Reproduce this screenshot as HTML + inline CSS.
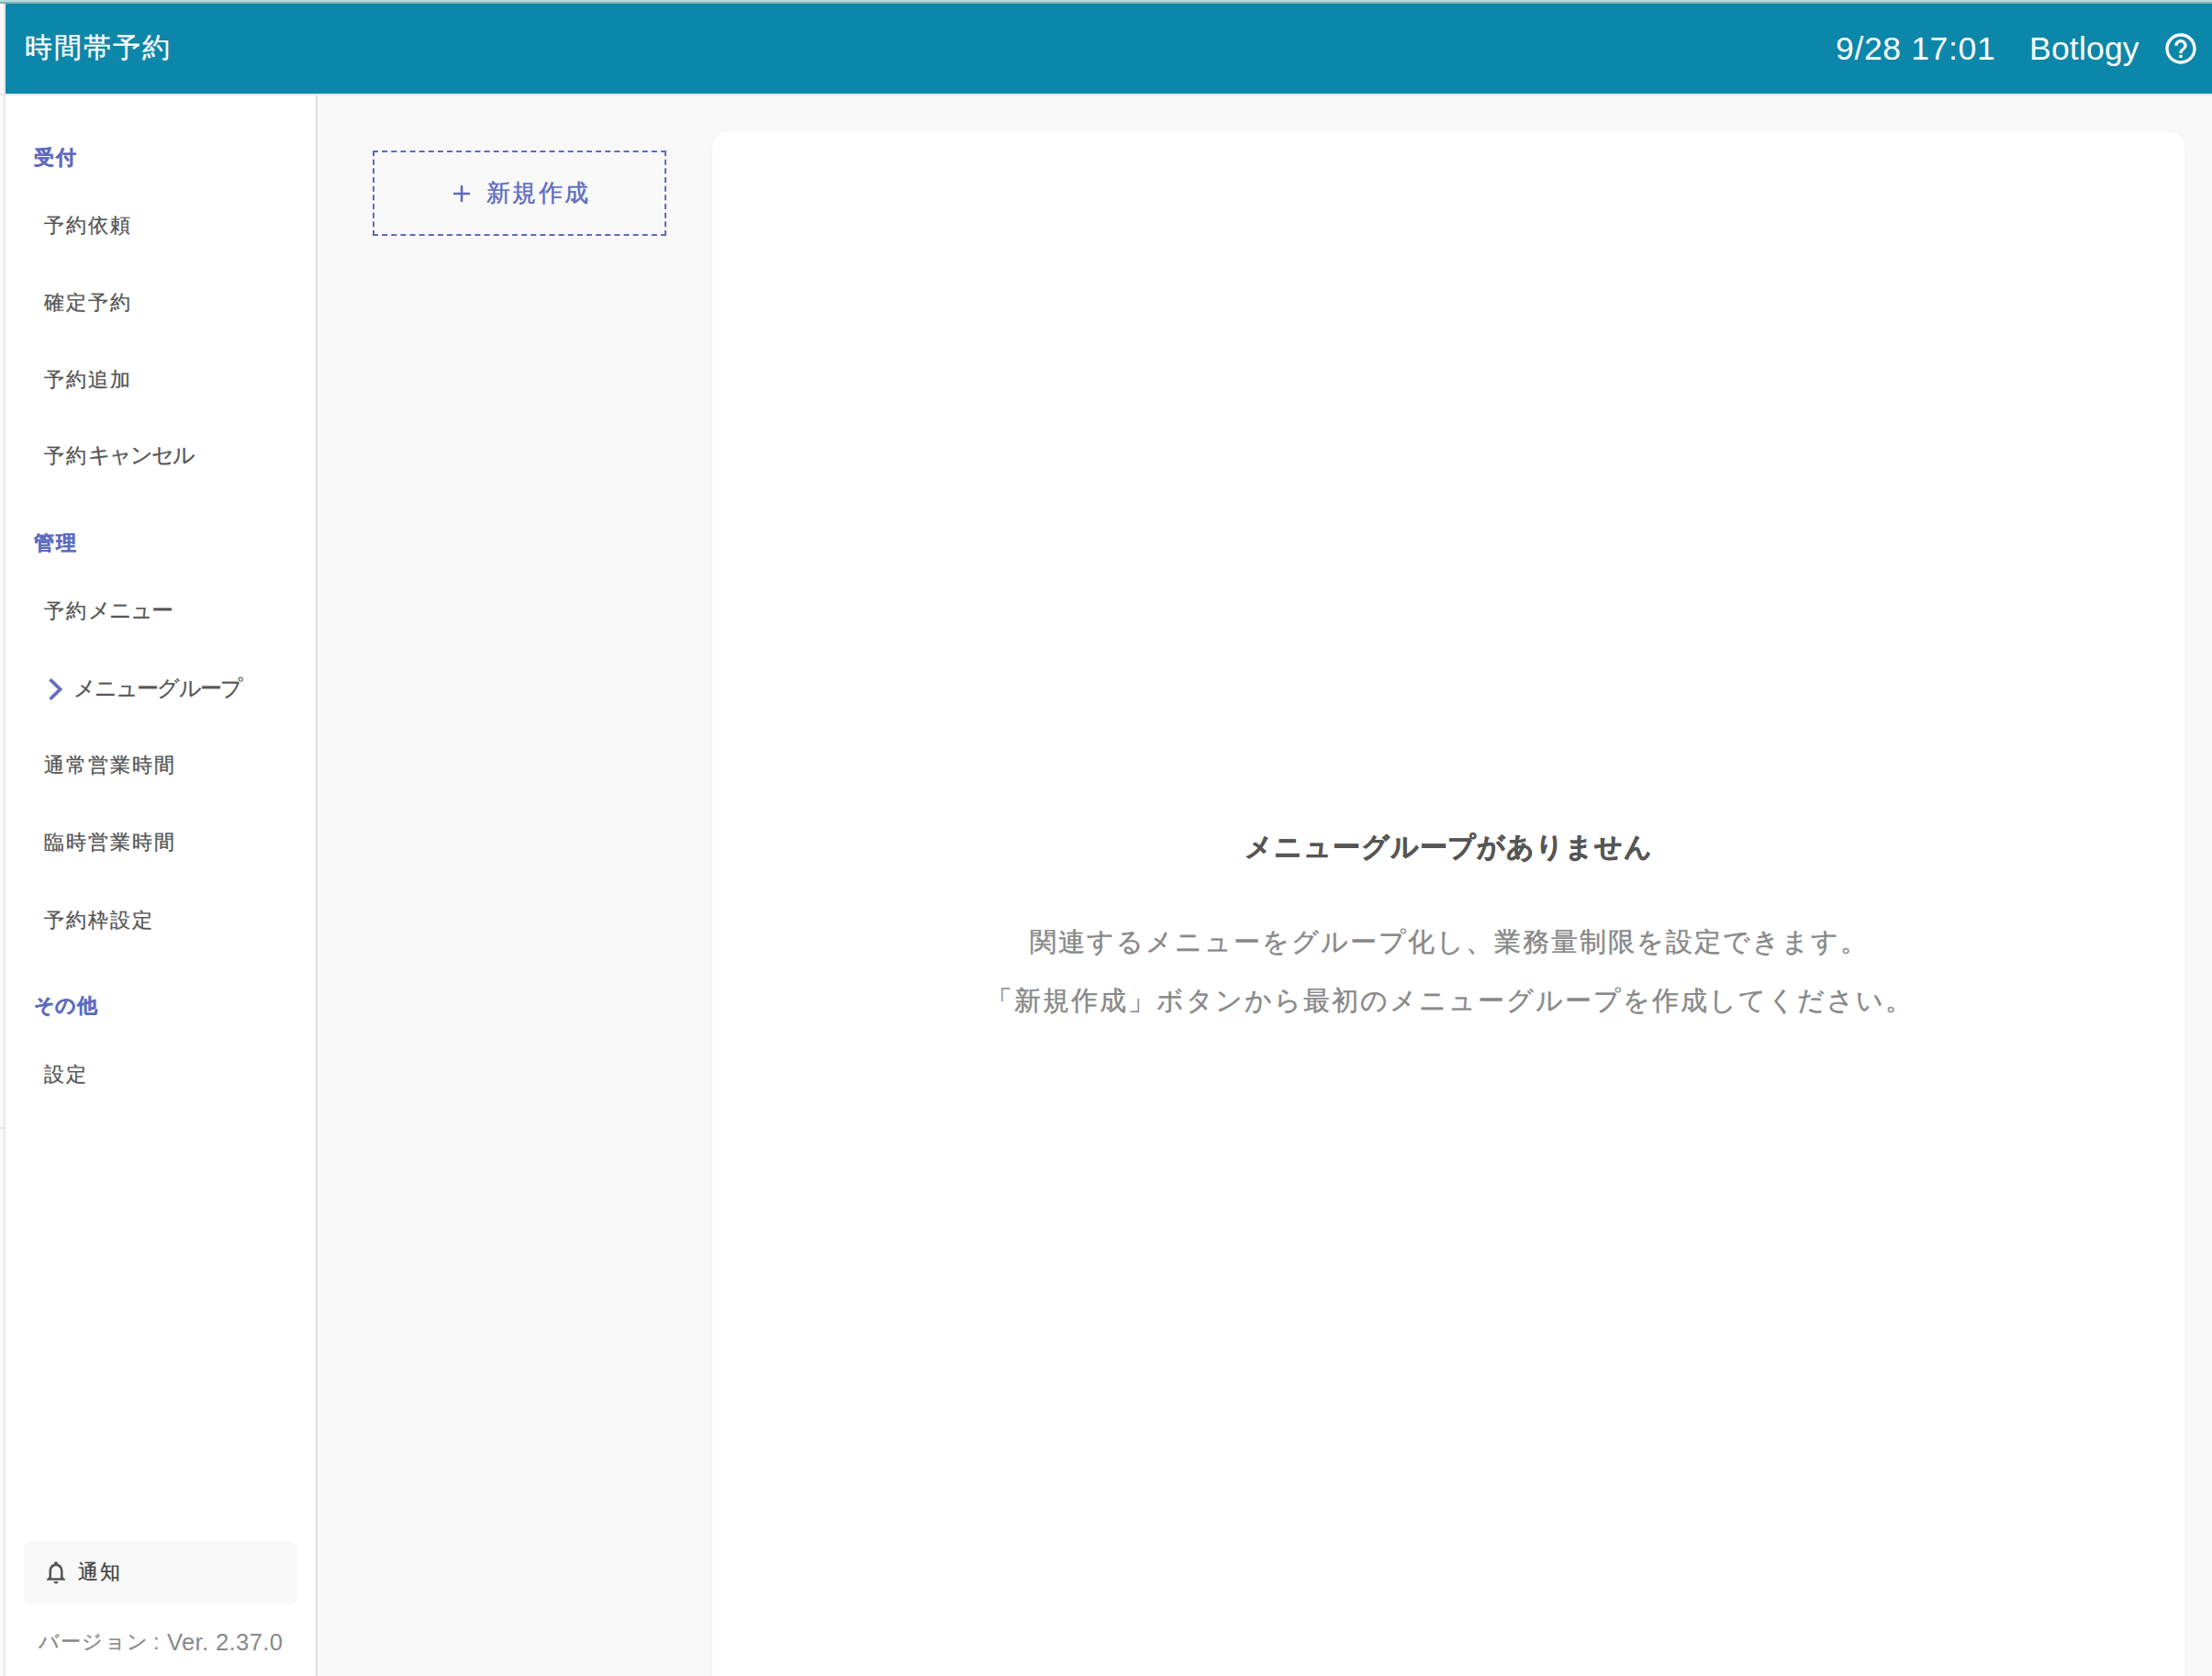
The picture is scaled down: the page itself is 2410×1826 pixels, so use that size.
<!DOCTYPE html>
<html lang="ja">
<head>
<meta charset="utf-8">
<title>時間帯予約</title>
<style>
*{box-sizing:border-box;margin:0;padding:0}
html,body{width:2410px;height:1826px;overflow:hidden}
body{position:relative;background:#f8f8f8;font-family:"Liberation Sans",sans-serif;color:#555}
.abs{position:absolute;white-space:nowrap}
#topA{left:0;top:0;width:2410px;height:2px;background:#addfe3}
#topB{left:0;top:2px;width:2410px;height:2px;background:#8eabac}
#lstrip{left:0;top:4px;width:4px;height:1822px;background:#f8f9fb}
#lstripB{left:4px;top:4px;width:1px;height:1822px;background:#e0e0e8}
#lstripC{left:5px;top:4px;width:1px;height:1822px;background:#f2ecee}
#header{left:6px;top:4px;width:2404px;height:98px;background:#0c87aa}
#hline{left:0;top:102px;width:2410px;height:2px;background:#e6e6ec}
#ltick{left:0;top:1228px;width:4px;height:2px;background:#e2e2e6}
#sidebar{left:6px;top:104px;width:338px;height:1722px;background:#fff}
#sideB{left:344px;top:104px;width:2px;height:1722px;background:#dedede}
#title{left:27px;top:32px;font-size:30px;line-height:40px;color:#fff;letter-spacing:2px;-webkit-text-stroke:0.3px #fff}
#date{left:2000px;top:33px;font-size:35.5px;line-height:40px;color:#fff;letter-spacing:0.65px}
#user{left:2211px;top:33px;font-size:35.5px;line-height:40px;color:#fff;letter-spacing:0.2px}
#help{left:2356px;top:33px;width:40px;height:40px}
.sec{left:37px;font-size:22px;line-height:30px;font-weight:bold;color:#5c6bc0;letter-spacing:1.6px;-webkit-text-stroke:0.3px #5c6bc0}
.item{left:48px;font-size:22px;line-height:30px;color:#555;letter-spacing:2px;-webkit-text-stroke:0.3px #555}
.k{font-size:24px;letter-spacing:-1.9px}
#chev{left:50px;top:736px;width:22px;height:30px}
#notice{left:26px;top:1679px;width:298px;height:69px;background:#f8f8f8;border-radius:8px}
#bell{left:46px;top:1698px;width:30px;height:30px}
#noticeT{left:85px;top:1698px;font-size:22px;line-height:30px;color:#444;letter-spacing:2px;-webkit-text-stroke:0.3px #444}
.ver{top:1774px;font-size:24px;line-height:30px;color:#888}
#newbtn{left:406px;top:164px;width:320px;height:93px;border:2px dashed #5c6bc0}
#plus{left:494px;top:202px;width:18px;height:18px}
#newT{left:530px;top:192px;font-size:26px;line-height:36px;color:#5c6bc0;letter-spacing:2.4px;-webkit-text-stroke:0.4px #5c6bc0}
#panel{left:776px;top:144px;width:1604px;height:1700px;background:#fff;border-radius:16px;box-shadow:0 2px 6px rgba(0,0,0,0.03)}
#etitle{left:776px;width:1604px;top:903px;text-align:center;font-size:29.5px;line-height:40px;font-weight:bold;color:#555;letter-spacing:0.9px;text-indent:0.9px;-webkit-text-stroke:0.5px #555}
.edesc{left:776px;width:1604px;text-align:center;font-size:29px;line-height:40px;color:#888;letter-spacing:2px;text-indent:2px;-webkit-text-stroke:0.4px #888}
</style>
</head>
<body>
<div class="abs" id="topA"></div>
<div class="abs" id="topB"></div>
<div class="abs" id="lstrip"></div>
<div class="abs" id="lstripB"></div>
<div class="abs" id="lstripC"></div>
<div class="abs" id="ltick"></div>
<div class="abs" id="header"></div>
<div class="abs" id="hline"></div>
<div class="abs" id="sidebar"></div>
<div class="abs" id="sideB"></div>

<div class="abs" id="title">時間帯予約</div>
<div class="abs" id="date">9/28 17:01</div>
<div class="abs" id="user">Botlogy</div>
<svg class="abs" id="help" viewBox="0 0 24 24"><path fill="#fff" d="M11 18h2v-2h-2v2zm1-16C6.48 2 2 6.48 2 12s4.48 10 10 10 10-4.48 10-10S17.52 2 12 2zm0 18c-4.41 0-8-3.59-8-8s3.59-8 8-8 8 3.59 8 8-3.59 8-8 8zm0-14c-2.21 0-4 1.79-4 4h2c0-1.1.9-2 2-2s2 .9 2 2c0 2-3 1.75-3 5h2c0-2.25 3-2.5 3-5 0-2.21-1.79-4-4-4z"/></svg>

<div class="abs sec" style="top:157px">受付</div>
<div class="abs item" style="top:231px">予約依頼</div>
<div class="abs item" style="top:315px">確定予約</div>
<div class="abs item" style="top:399px">予約追加</div>
<div class="abs item" style="top:481px">予約<span class="k">キャンセル</span></div>
<div class="abs sec" style="top:577px">管理</div>
<div class="abs item" style="top:650px">予約<span class="k">メニュー</span></div>
<svg class="abs" id="chev" viewBox="0 0 22 30"><path d="M4.6 4.2 L15.6 15 L4.6 25.8" fill="none" stroke="#5f6ec1" stroke-width="3.7"/></svg>
<div class="abs item" style="top:735px;left:80px"><span class="k">メニューグループ</span></div>
<div class="abs item" style="top:819px">通常営業時間</div>
<div class="abs item" style="top:903px">臨時営業時間</div>
<div class="abs item" style="top:988px">予約枠設定</div>
<div class="abs sec" style="top:1081px;letter-spacing:0.4px">その他</div>
<div class="abs item" style="top:1156px">設定</div>

<div class="abs" id="notice"></div>
<svg class="abs" id="bell" viewBox="0 0 24 24"><path fill="#555" d="M12 22c1.1 0 2-.9 2-2h-4c0 1.1.9 2 2 2zm6-6v-5c0-3.07-1.63-5.64-4.5-6.320V4c0-.83-.67-1.500-1.500-1.500s-1.500.67-1.500 1.500v.68C7.640 5.360 6 7.920 6 11v5l-2 2v1h16v-1l-2-2zm-2 1H8v-6c0-2.480 1.510-4.500 4-4.500s4 2.020 4 4.500v6z"/></svg>
<div class="abs" id="noticeT">通知</div>
<div class="abs ver" style="left:42px;font-size:22px;letter-spacing:1.2px;-webkit-text-stroke:0.3px #888">バージョン</div>
<div class="abs ver" style="left:167px">:</div>
<div class="abs ver" style="left:182px;font-size:25.5px;letter-spacing:0.4px">Ver. 2.37.0</div>

<div class="abs" id="newbtn"></div>
<svg class="abs" id="plus" viewBox="0 0 18 18"><path d="M9 0V18M0 9H18" stroke="#5c6bc0" stroke-width="2.5" fill="none"/></svg>
<div class="abs" id="newT">新規作成</div>

<div class="abs" id="panel"></div>
<div class="abs" id="etitle">メニューグループがありません</div>
<div class="abs edesc" style="top:1006px">関連するメニューをグループ化し、業務量制限を設定できます。</div>
<div class="abs edesc" style="top:1070px">「新規作成」ボタンから最初のメニューグループを作成してください。</div>
</body>
</html>
